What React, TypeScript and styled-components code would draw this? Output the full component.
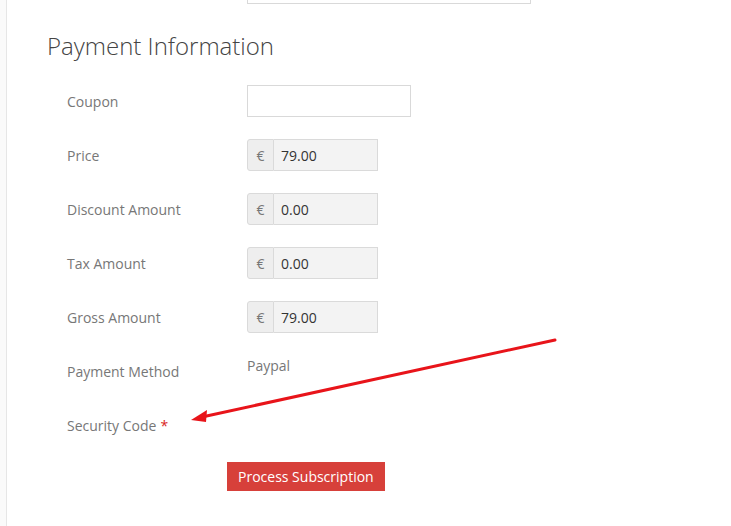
import React from 'react';
import styled, { createGlobalStyle } from 'styled-components';

const GlobalStyle = createGlobalStyle`
  html, body {
    margin: 0;
    padding: 0;
    background: #fafafa;
    font-family: 'Open Sans', 'Liberation Sans', sans-serif;
  }
`;

const Page = styled.div`
  position: relative;
  margin-left: 6px;
  height: 526px;
  overflow: hidden;
  background: #fff;
  border-left: 1px solid #e6e6e6;
`;

const Form = styled.div`
  padding-left: 60px;
`;

const Row = styled.div<{ $top?: number }>`
  display: flex;
  align-items: center;
  height: 32px;
  margin-bottom: 22px;
  margin-top: ${(p) => (p.$top ? `${p.$top}px` : '0')};
`;

const Label = styled.div`
  width: 180px;
  font-size: 14px;
  color: #777;
`;

const Required = styled.span`
  color: #d9261c;
  margin-left: 4px;
`;

const Heading = styled.h3`
  margin: 24px 0 21px -20px;
  font-size: 24px;
  font-weight: 300;
  color: #444;
  line-height: 36px;
`;

const TextInput = styled.input<{ $width: number }>`
  box-sizing: border-box;
  width: ${(p) => p.$width}px;
  height: 32px;
  border: 1px solid #d9d9d9;
  background: #fff;
  outline: none;
`;

const Group = styled.div`
  display: flex;
  width: 131px;
  height: 32px;
`;

const Addon = styled.span`
  box-sizing: border-box;
  width: 27px;
  display: flex;
  align-items: center;
  justify-content: center;
  background: #eee;
  border: 1px solid #dadada;
  border-radius: 3px 0 0 3px;
  color: #777;
  font-size: 14px;
`;

const ReadOnly = styled.div`
  box-sizing: border-box;
  flex: 1;
  display: flex;
  align-items: center;
  padding-left: 7px;
  background: #f3f3f3;
  border: 1px solid #dadada;
  border-left: none;
  color: #333;
  font-size: 14px;
`;

const Static = styled.div`
  align-self: flex-start;
  padding-top: 1px;
  font-size: 14px;
  color: #777;
`;

const SubmitRow = styled.div`
  padding-left: 160px;
  margin-top: -1px;
`;

const Button = styled.button`
  height: 29px;
  padding: 0 11px;
  border: none;
  border-radius: 0;
  background: #d7403a;
  color: #fff;
  font-family: 'Open Sans', 'Liberation Sans', sans-serif;
  font-size: 14px;
`;

const Arrow = styled.svg`
  position: absolute;
  left: -7px;
  top: 0;
  pointer-events: none;
`;

const amounts = [
  { label: 'Price', value: '79.00' },
  { label: 'Discount Amount', value: '0.00' },
  { label: 'Tax Amount', value: '0.00' },
  { label: 'Gross Amount', value: '79.00' },
];

export default function App() {
  return (
    <>
      <GlobalStyle />
      <Page>
        <Form>
          <Row $top={-28} style={{ marginBottom: 0 }}>
            <Label />
            <TextInput $width={284} readOnly />
          </Row>
          <Heading>Payment Information</Heading>
          <Row>
            <Label>Coupon</Label>
            <TextInput $width={164} />
          </Row>
          {amounts.map((a) => (
            <Row key={a.label}>
              <Label>{a.label}</Label>
              <Group>
                <Addon>€</Addon>
                <ReadOnly>{a.value}</ReadOnly>
              </Group>
            </Row>
          ))}
          <Row>
            <Label>Payment Method</Label>
            <Static>Paypal</Static>
          </Row>
          <Row>
            <Label>
              Security Code<Required>*</Required>
            </Label>
          </Row>
          <SubmitRow>
            <Button>Process Subscription</Button>
          </SubmitRow>
        </Form>
        <Arrow width="731" height="526" viewBox="0 0 731 526">
          <line x1="555" y1="340" x2="202" y2="417" stroke="#e8141a" strokeWidth="3" strokeLinecap="round" />
          <polygon points="191,420 207,410 206,422" fill="#e8141a" />
        </Arrow>
      </Page>
    </>
  );
}
